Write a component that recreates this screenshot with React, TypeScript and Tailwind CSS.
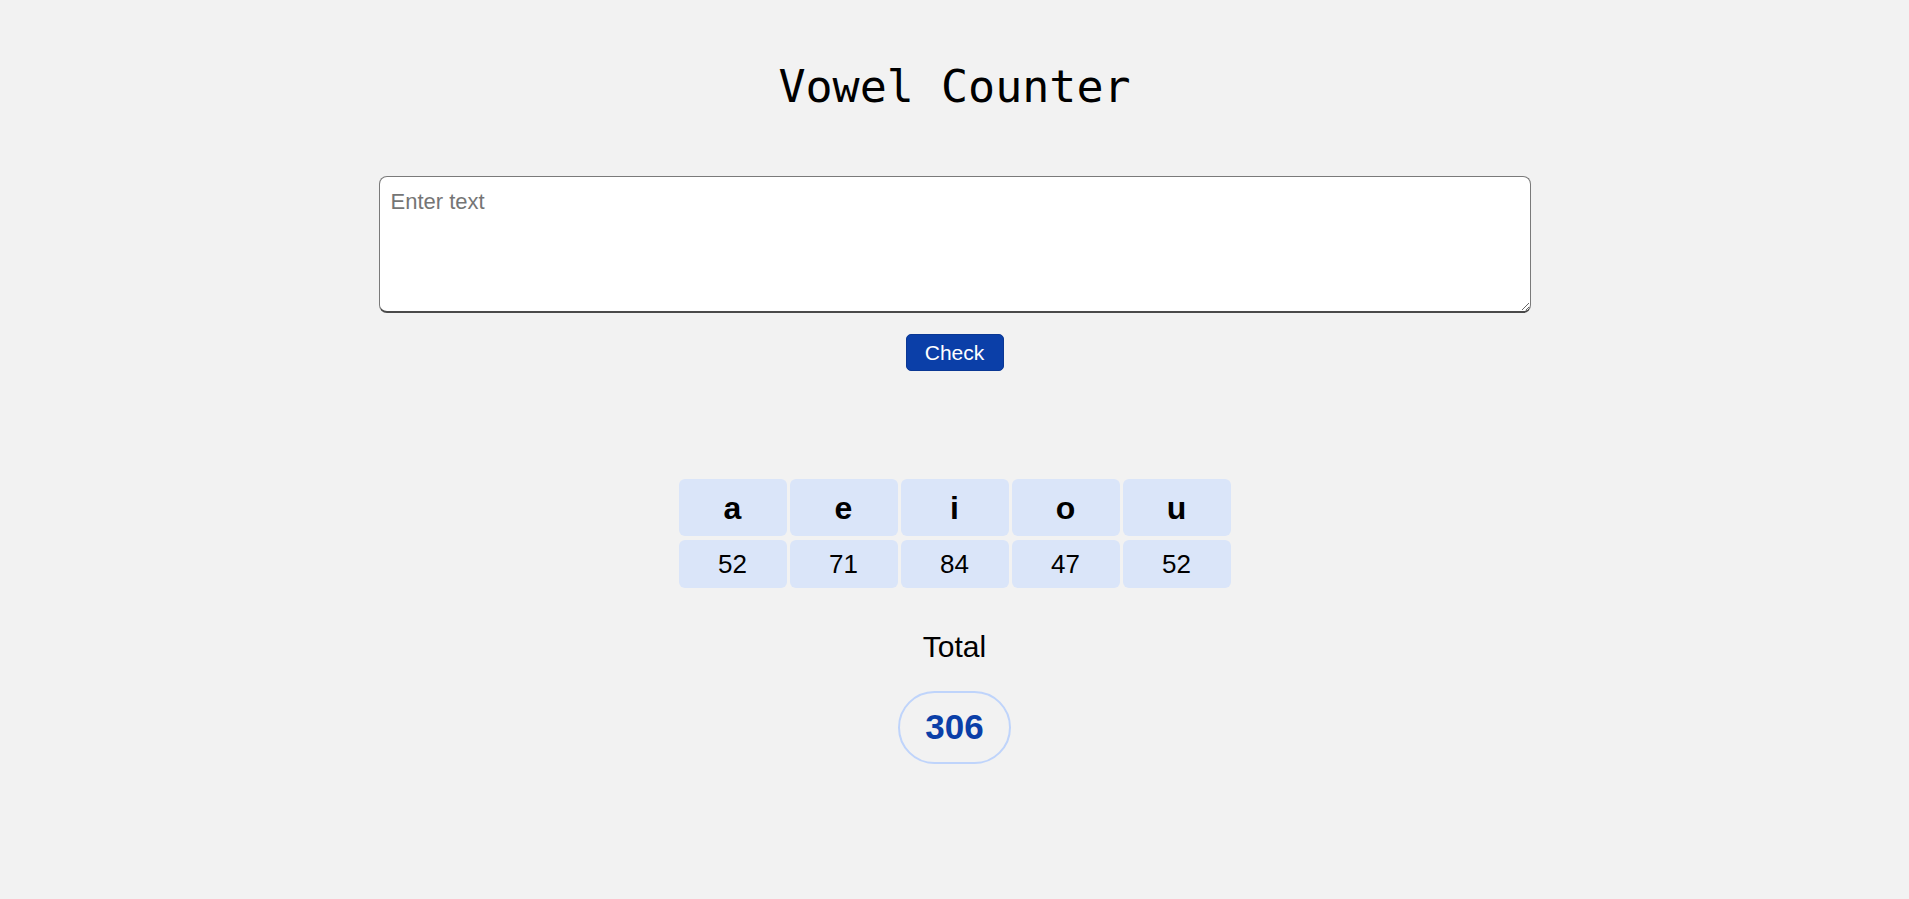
import { useState } from 'react';

const VOWELS = ['a', 'e', 'i', 'o', 'u'];

function countVowels(text: string) {
  const counts: Record<string, number> = { a: 0, e: 0, i: 0, o: 0, u: 0 };
  for (const ch of text.toLowerCase()) {
    if (ch in counts) counts[ch] += 1;
  }
  return counts;
}

export default function App() {
  const [text, setText] = useState('');
  const [counts, setCounts] = useState<Record<string, number>>({ a: 52, e: 71, i: 84, o: 47, u: 52 });

  const total = VOWELS.reduce((sum, v) => sum + counts[v], 0);

  return (
    <div className="min-h-screen bg-[#f2f2f2] flex flex-col items-center font-['Liberation_Sans',Arial,sans-serif] text-black">
      <h1 className="mt-[60px] h-[54px] leading-[54px] text-[45px] font-normal font-['DejaVu_Sans_Mono',monospace]">
        Vowel Counter
      </h1>

      <textarea
        value={text}
        onChange={(e) => setText(e.target.value)}
        placeholder="Enter text"
        className="mt-[62px] w-[1152px] h-[137px] bg-white rounded-[8px] border border-[#7a7a7a] border-b-2 border-b-[#4a4a4a] pl-[11px] pt-[12px] text-[22px] leading-[25px] placeholder:text-[#757575] outline-none"
      />

      <button
        onClick={() => setCounts(countVowels(text))}
        className="mt-[21px] w-[98px] h-[37px] rounded-[5px] bg-[#0b3fa8] border border-[#0a3794] text-white text-[21px] leading-none"
      >
        Check
      </button>

      <div className="mt-[108px] grid grid-cols-[repeat(5,108px)] gap-x-[3px] gap-y-[4px]">
        {VOWELS.map((v) => (
          <div key={v} className="h-[57px] rounded-[6px] bg-[#dae5f9] flex items-center justify-center text-[32px] font-bold">
            {v}
          </div>
        ))}
        {VOWELS.map((v) => (
          <div key={v + '-n'} className="h-[48px] rounded-[6px] bg-[#dae5f9] flex items-center justify-center text-[26px]">
            {counts[v]}
          </div>
        ))}
      </div>

      <div className="mt-[42px] text-[30px] leading-[34px]">Total</div>

      <div className="mt-[27px] w-[113px] h-[73px] rounded-full border-2 border-[#bfd4fb] flex items-center justify-center text-[35px] font-bold text-[#0b3fa8]">
        {total}
      </div>
    </div>
  );
}
